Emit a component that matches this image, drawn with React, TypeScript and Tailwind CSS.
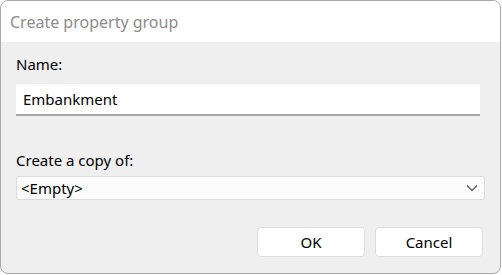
import React from "react";

export default function App() {
  return (
    <div className="w-[502px] h-[275px] bg-white font-['Noto_Sans','Open_Sans',sans-serif]">
      <div className="w-[501px] h-[274px] flex flex-col rounded-[8px] border-[1.5px] border-[#a9a9a9] overflow-hidden bg-[#efefef]">
        {/* title bar */}
        <div className="h-[41px] shrink-0 bg-white flex items-center pl-[9px] text-[16px] text-[#8c8c8c]">
          Create property group
        </div>

        <div className="flex flex-col pl-[15px] pr-[15px]">
          <label className="mt-[12px] text-[15px] leading-[20px] text-black">Name:</label>
          <div className="mt-[10px] w-[464px] h-[32px] bg-white border-b-[2px] border-[#a6a6a6] flex items-center pl-[7px] text-[15px] text-black">
            Embankment
          </div>

          <label className="mt-[34px] text-[15px] leading-[20px] text-black">Create a copy of:</label>
          <div className="mt-[6px] w-[469px] h-[24px] bg-[#fbfbfb] border border-[#dcdcdc] rounded-[3px] flex items-center justify-between pl-[4px] pr-[6px] text-[15px] text-black">
            <span>&lt;Empty&gt;</span>
            <svg width="12" height="8" viewBox="0 0 12 8" fill="none">
              <path d="M1 1.5 L6 6.5 L11 1.5" stroke="#5f5f5f" strokeWidth="1.3" />
            </svg>
          </div>

          <div className="mt-[27px] flex justify-end gap-[10px] pr-[2px]">
            <button className="w-[108px] h-[30px] bg-white border border-[#dedede] rounded-[4px] text-[15px] text-black">
              OK
            </button>
            <button className="w-[108px] h-[30px] bg-white border border-[#dedede] rounded-[4px] text-[15px] text-black">
              Cancel
            </button>
          </div>
        </div>
      </div>
    </div>
  );
}
